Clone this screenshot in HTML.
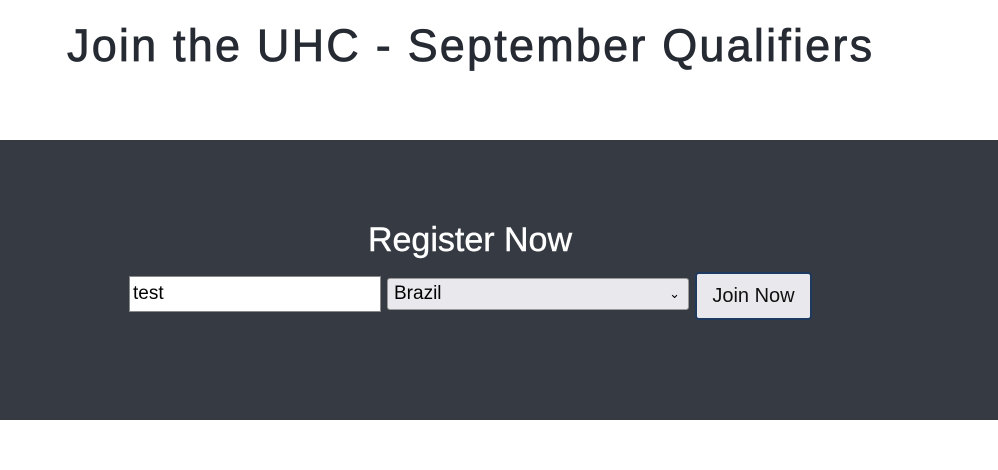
<!DOCTYPE html>
<html><head><style>
body{margin:0;width:998px;height:470px;background:#fff;font-family:"Liberation Sans",sans-serif;position:relative;overflow:hidden}
h1{position:absolute;left:67px;top:20px;margin:0;font-size:45px;font-weight:normal;-webkit-text-stroke:0.8px #262a33;color:#262a33;letter-spacing:2.2px;white-space:nowrap}
.band{position:absolute;left:0;top:140px;width:998px;height:280px;background:#363a42}
.reg{position:absolute;left:0;width:940px;top:221px;text-align:center;color:#fff;font-size:34px;-webkit-text-stroke:0.4px #fff}
.in{position:absolute;left:129px;top:276px;background:#fff;border:1px solid #888;font-size:19px;line-height:34px;padding-left:3px;box-sizing:border-box;width:252px;height:36px;color:#000}
.sel{position:absolute;left:387px;top:278px;width:302px;height:32px;background:#e9e8ed;border:1px solid #999;border-radius:3px;box-sizing:border-box;font-size:19px;line-height:30px;padding-left:6px;color:#000}
.sel span{position:absolute;right:8px;top:0;font-size:13px}
.btn{position:absolute;left:695px;top:272px;width:117px;height:48px;background:#e9e8ed;border:2px solid #1e3a5f;border-radius:4px;box-sizing:border-box;font-size:20px;line-height:44px;text-align:center;color:#111}
</style></head><body>
<h1>Join the UHC - September Qualifiers</h1>
<div class="band"></div>
<div class="reg">Register Now</div>
<div class="in">test</div>
<div class="sel">Brazil<span>&#8964;</span></div>
<div class="btn">Join Now</div>
</body></html>
